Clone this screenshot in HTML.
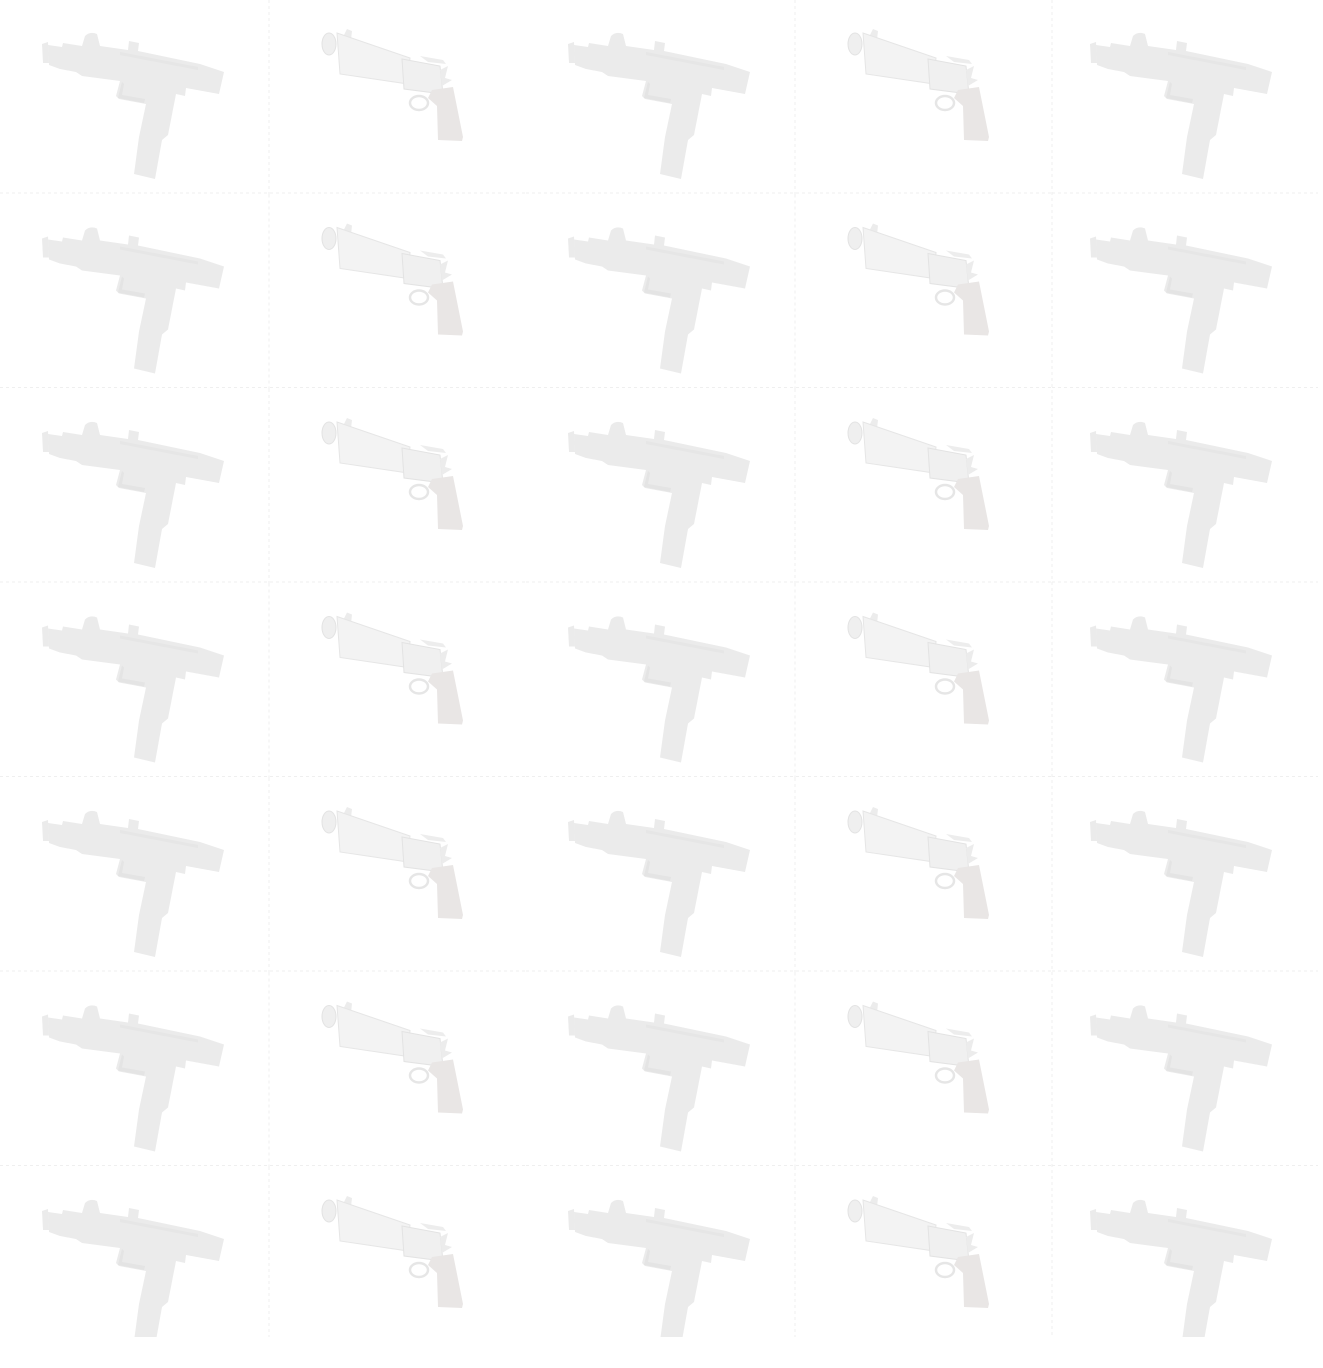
<!DOCTYPE html>
<html><head><style>
html,body{margin:0;padding:0;background:#fff;width:1323px;height:1368px;overflow:hidden}
svg{display:block}
</style></head><body>
<svg width="1323" height="1368" xmlns="http://www.w3.org/2000/svg">
<defs>
<g id="uzi" fill="#ebebeb">
 <path d="M42 44 L48 42 L49 63 L43 63 Z"/>
 <path d="M48 45 L62 47 L63 43 L82 46 L85 36 Q90 31 97 34 L100 46 L128 50 L129 41 L139 43 L138 51 L200 64 L224 72 L219 94 L186 88 L185 96 L176 94 L168 135 L162 140 L155 179 L134 174 L139 137 L146 104 L119 99 L116 96 L120 81 L82 76 L76 72 L60 69 L49 65 Z"/>
 <path d="M122 82 L118 98 L144 103 L145 99 L122 95 L124 84 Z" fill="#e4e4e4"/>
 <path d="M120 52 L198 67 L198 70 L120 55 Z" fill="#e6e6e6"/>
</g>
<g id="rev">
 <path d="M343 37 L347 29 L352 31 L351 40 Z" fill="#ececec"/>
 <path d="M337 33 L410 58 L408 84 L340 74 Z" fill="#f3f3f3" stroke="#e6e6e6" stroke-width="1"/>
 <ellipse cx="329" cy="44" rx="7" ry="11" fill="#efefef" stroke="#e3e3e3"/>
 <path d="M402 59 L440 66 L443 94 L404 89 Z" fill="#f0f0f0" stroke="#e3e3e3"/>
 <path d="M420 56 L443 60 L446 64 L428 62 Z" fill="#ededed"/>
 <path d="M440 70 L448 66 L445 78 L452 80 L442 86 Z" fill="#ececec"/>
 <ellipse cx="419" cy="103" rx="9" ry="7" fill="none" stroke="#e6e6e6" stroke-width="2.5"/>
 <path d="M432 90 L453 87 L463 137 L462 141 L438 140 L437 106 L428 98 Z" fill="#e9e6e5"/>
</g>
<pattern id="p" x="0" y="0" width="526" height="194.5" patternUnits="userSpaceOnUse">
 <use href="#uzi"/>
 <use href="#rev"/>
 <line x1="0" y1="193" x2="526" y2="193" stroke="#efefef" stroke-dasharray="3,3"/>
 <line x1="269" y1="0" x2="269" y2="194.5" stroke="#efefef" stroke-dasharray="3,3"/>
 <line x1="526.5" y1="0" x2="526.5" y2="194.5" stroke="#efefef" stroke-dasharray="3,3"/>
</pattern>
<clipPath id="c"><rect x="0" y="0" width="1323" height="1337"/></clipPath>
</defs>
<g clip-path="url(#c)">
 <rect x="0" y="0" width="1052" height="1337" fill="url(#p)"/>
 <g transform="translate(1048 0)">
  <use href="#uzi"/><use href="#uzi" y="194.5"/><use href="#uzi" y="389"/><use href="#uzi" y="583.5"/><use href="#uzi" y="778"/><use href="#uzi" y="972.5"/><use href="#uzi" y="1167"/>
 </g>
 <line x1="1052" y1="0" x2="1052" y2="1337" stroke="#efefef" stroke-dasharray="3,3"/>
 <g stroke="#efefef" stroke-dasharray="3,3">
  <line x1="1052" y1="193" x2="1318" y2="193"/><line x1="1052" y1="387.5" x2="1318" y2="387.5"/><line x1="1052" y1="582" x2="1318" y2="582"/><line x1="1052" y1="776.5" x2="1318" y2="776.5"/><line x1="1052" y1="971" x2="1318" y2="971"/><line x1="1052" y1="1165.5" x2="1318" y2="1165.5"/>
 </g>
</g>
</svg>
</body></html>
